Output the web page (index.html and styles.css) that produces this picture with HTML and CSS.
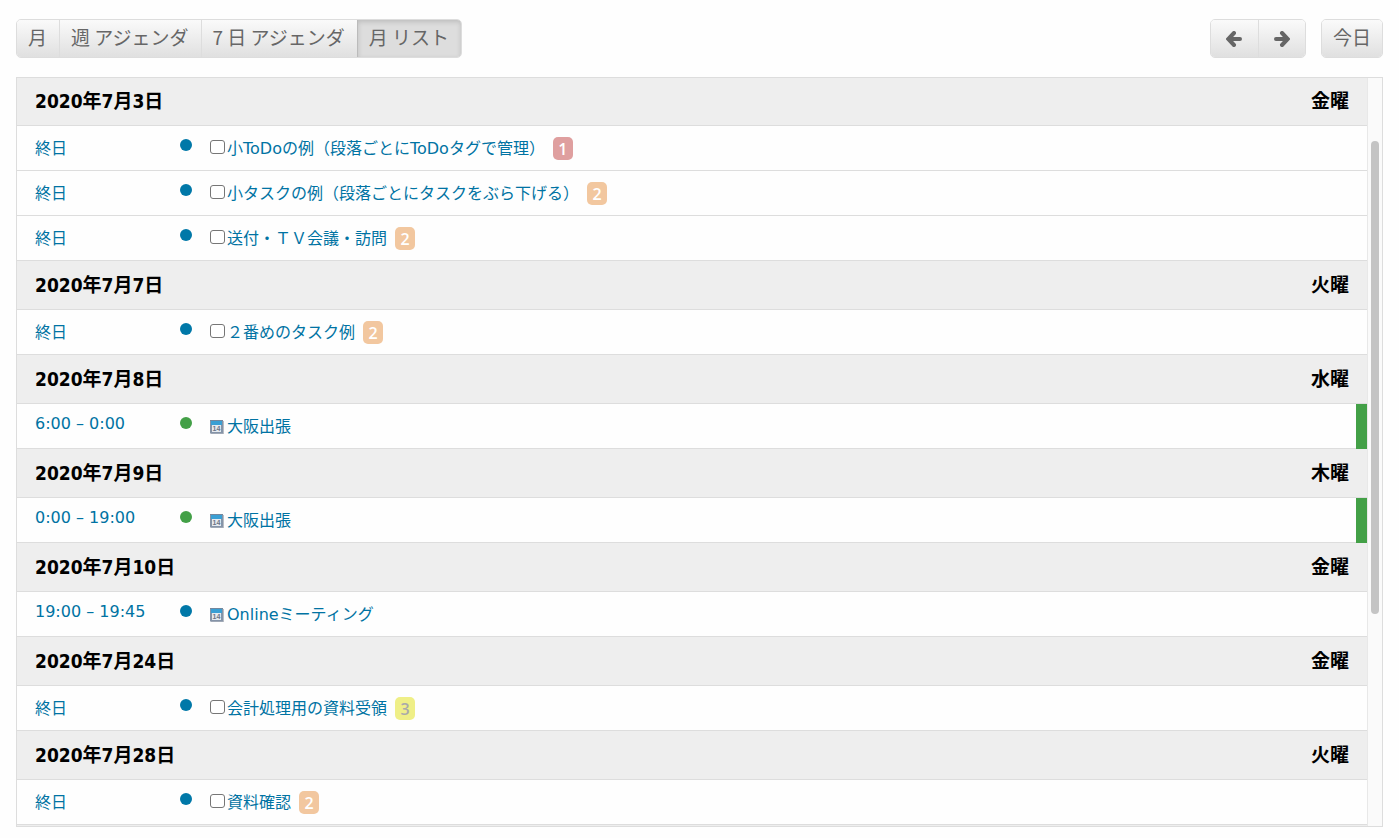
FILE: index.html
```html
<!DOCTYPE html>
<html lang="ja">
<head>
  <meta charset="UTF-8">
  <meta name="viewport" content="width=device-width, initial-scale=1">
  <title>カレンダー</title>
  <link rel="stylesheet" href="styles.css">
</head>
<body>
  <svg width="0" height="0" class="sprite" aria-hidden="true">
    <symbol id="icon-calendar" viewBox="0 0 14 14">
      <rect x="1" y="1" width="13" height="13" fill="#b9bdc4"/>
      <rect x="0" y="0" width="13" height="13.5" fill="#8594a8"/>
      <rect x="0" y="0" width="13" height="1" fill="#73879d"/>
      <rect x="1" y="1" width="11" height="4" fill="#3a9fd4"/>
      <rect x="2" y="5" width="9" height="7" fill="#e6eaf0"/>
      <text x="6.5" y="11" font-size="7" font-weight="bold" text-anchor="middle" fill="#6b7686">14</text>
    </symbol>
  </svg>

  <header class="toolbar">
    <div class="button-group views">
      <button type="button">月</button>
      <button type="button">週 アジェンダ</button>
      <button type="button">7 日 アジェンダ</button>
      <button type="button" class="active">月 リスト</button>
    </div>
    <div class="toolbar-right">
      <div class="button-group nav">
        <button type="button" aria-label="前へ">
          <svg width="16" height="16" viewBox="0 0 16 16"><path d="M8 2 L2.3 8 L8 14 M3 8 H14" /></svg>
        </button>
        <button type="button" aria-label="次へ">
          <svg width="16" height="16" viewBox="0 0 16 16"><path d="M8 2 L13.7 8 L8 14 M13 8 H2" /></svg>
        </button>
      </div>
      <div class="button-group">
        <button type="button">今日</button>
      </div>
    </div>
  </header>

  <main class="list-view">
    <div class="list-scroller">
      <table class="list-table">
        <tbody>
          <tr class="list-heading"><th colspan="4"><div><span>2020年7月3日</span><span>金曜</span></div></th></tr>
          <tr class="list-item">
            <td class="time">終日</td>
            <td class="marker"><span class="dot"></span></td>
            <td class="title"><div><input type="checkbox" aria-label="小ToDoの例"><a href="#">小ToDoの例（段落ごとにToDoタグで管理）</a><span class="badge p1">1</span></div></td>
            <td class="edge"></td>
          </tr>
          <tr class="list-item">
            <td class="time">終日</td>
            <td class="marker"><span class="dot"></span></td>
            <td class="title"><div><input type="checkbox" aria-label="小タスクの例"><a href="#">小タスクの例（段落ごとにタスクをぶら下げる）</a><span class="badge p2">2</span></div></td>
            <td class="edge"></td>
          </tr>
          <tr class="list-item">
            <td class="time">終日</td>
            <td class="marker"><span class="dot"></span></td>
            <td class="title"><div><input type="checkbox" aria-label="送付・ＴＶ会議・訪問"><a href="#">送付・ＴＶ会議・訪問</a><span class="badge p2">2</span></div></td>
            <td class="edge"></td>
          </tr>

          <tr class="list-heading"><th colspan="4"><div><span>2020年7月7日</span><span>火曜</span></div></th></tr>
          <tr class="list-item">
            <td class="time">終日</td>
            <td class="marker"><span class="dot"></span></td>
            <td class="title"><div><input type="checkbox" aria-label="２番めのタスク例"><a href="#">２番めのタスク例</a><span class="badge p2">2</span></div></td>
            <td class="edge"></td>
          </tr>

          <tr class="list-heading"><th colspan="4"><div><span>2020年7月8日</span><span>水曜</span></div></th></tr>
          <tr class="list-item trip">
            <td class="time timed">6:00 – 0:00</td>
            <td class="marker"><span class="dot"></span></td>
            <td class="title"><div><svg class="calendar" width="14" height="14" aria-hidden="true"><use href="#icon-calendar"/></svg><a href="#">大阪出張</a></div></td>
            <td class="edge"></td>
          </tr>

          <tr class="list-heading"><th colspan="4"><div><span>2020年7月9日</span><span>木曜</span></div></th></tr>
          <tr class="list-item trip">
            <td class="time timed">0:00 – 19:00</td>
            <td class="marker"><span class="dot"></span></td>
            <td class="title"><div><svg class="calendar" width="14" height="14" aria-hidden="true"><use href="#icon-calendar"/></svg><a href="#">大阪出張</a></div></td>
            <td class="edge"></td>
          </tr>

          <tr class="list-heading"><th colspan="4"><div><span>2020年7月10日</span><span>金曜</span></div></th></tr>
          <tr class="list-item">
            <td class="time timed">19:00 – 19:45</td>
            <td class="marker"><span class="dot"></span></td>
            <td class="title"><div><svg class="calendar" width="14" height="14" aria-hidden="true"><use href="#icon-calendar"/></svg><a href="#">Onlineミーティング</a></div></td>
            <td class="edge"></td>
          </tr>

          <tr class="list-heading"><th colspan="4"><div><span>2020年7月24日</span><span>金曜</span></div></th></tr>
          <tr class="list-item">
            <td class="time">終日</td>
            <td class="marker"><span class="dot"></span></td>
            <td class="title"><div><input type="checkbox" aria-label="会計処理用の資料受領"><a href="#">会計処理用の資料受領</a><span class="badge p3">3</span></div></td>
            <td class="edge"></td>
          </tr>

          <tr class="list-heading"><th colspan="4"><div><span>2020年7月28日</span><span>火曜</span></div></th></tr>
          <tr class="list-item">
            <td class="time">終日</td>
            <td class="marker"><span class="dot"></span></td>
            <td class="title"><div><input type="checkbox" aria-label="資料確認"><a href="#">資料確認</a><span class="badge p2">2</span></div></td>
            <td class="edge"></td>
          </tr>
        </tbody>
      </table>
    </div>
    <div class="scrollbar"><div class="thumb"></div></div>
  </main>
</body>
</html>
```
FILE: styles.css
```css
* {
  box-sizing: border-box;
}

body {
  margin: 0;
  height: 100vh;
  padding: 19px 16px 11px;
  display: flex;
  flex-direction: column;
  gap: 19px;
  background: #fefefe;
  color: #000;
  font-family: "DejaVu Sans", "Noto Sans CJK JP", sans-serif;
  font-size: 16px;
}

.sprite {
  display: none;
}

/* Toolbar */
.toolbar {
  display: flex;
  justify-content: space-between;
}

.toolbar-right {
  display: flex;
  gap: 15px;
}

.button-group {
  display: flex;
  height: 39px;
  border: 1px solid #ddd;
  border-radius: 5px;
  overflow: hidden;
}

.button-group button {
  border: none;
  border-left: 1px solid #ddd;
  margin: 0;
  padding: 0 11px 4px;
  background: linear-gradient(#fafafa, #e0e0e0);
  color: #666;
  font-family: "Noto Sans CJK JP", sans-serif;
  font-size: 19px;
  line-height: 33px;
  white-space: nowrap;
  cursor: pointer;
}

.views button {
  padding-right: 12px;
}

.button-group button:first-child {
  border-left: none;
}

.button-group button.active {
  border-left-color: #bbb;
  background: #ddd;
  box-shadow: inset 0 2px 5px rgba(0, 0, 0, 0.15);
}

.nav button {
  display: flex;
  align-items: center;
  justify-content: center;
  width: 47px;
  padding: 0;
}

.nav path {
  fill: none;
  stroke: #666;
  stroke-width: 4;
  stroke-linecap: round;
  stroke-linejoin: miter;
}

/* List */
.list-view {
  flex: 1;
  min-height: 0;
  display: flex;
  border: 1px solid #ddd;
}

.list-scroller {
  flex: 1;
  overflow: hidden;
  background: #eee;
}

.list-table {
  width: 100%;
  border-spacing: 0;
}

.list-heading th {
  padding: 10px 18px;
  background: #eee;
  border-bottom: 1px solid #ddd;
  font-family: "DejaVu Sans Condensed", "Noto Sans CJK JP", sans-serif;
  font-size: 19px;
  line-height: 28px;
}

.list-heading:first-child th {
  padding-top: 9px;
}

.list-heading div {
  display: flex;
  justify-content: space-between;
}

.list-item {
  color: #0073a3;
}

.list-item td {
  height: 45px;
  padding: 0;
  background: #fefefe;
  border-bottom: 1px solid #ddd;
  vertical-align: top;
}

.list-item .time {
  width: 163px;
  padding: 10px 0 0 18px;
  line-height: 26px;
  white-space: nowrap;
}

.list-item .timed {
  line-height: 20px;
}

.list-item .marker {
  width: 30px;
  padding-top: 13px;
}

.dot {
  display: block;
  width: 12px;
  height: 12px;
  border-radius: 50%;
  background: #0078a8;
}

.list-item .edge {
  width: 11px;
}

.trip .dot,
.list-item.trip .edge {
  background: #43a047;
}

.list-item.trip .edge {
  border-bottom-color: #43a047;
}

.title div {
  display: flex;
  align-items: center;
  height: 44px;
}

.title a {
  padding-top: 2px;
  color: inherit;
  text-decoration: none;
  line-height: 24px;
}

.title input {
  appearance: none;
  width: 15px;
  height: 14px;
  margin: 0 2px 2px 0;
  border: 1px solid #767676;
  border-radius: 3px;
  background: #fff;
}

.calendar {
  margin: 2px 3px 0 0;
}

.calendar,
.sprite {
  font-family: "Liberation Sans", sans-serif;
}

.badge {
  width: 20px;
  height: 23px;
  margin-left: 8px;
  border-radius: 5px;
  color: #fff;
  font-family: "Open Sans", sans-serif;
  font-weight: 600;
  line-height: 24px;
  text-align: center;
}

.badge.p1 {
  background: #df9f9f;
}

.badge.p2 {
  background: #f2c79f;
}

.badge.p3 {
  background: #efef87;
  color: #aaa;
}

/* Scrollbar */
.scrollbar {
  width: 15px;
  padding: 63px 3px 0;
  background: #fafafa;
  border-left: 1px solid #e8e8e8;
}

.thumb {
  width: 8px;
  height: 69%;
  border-radius: 4px;
  background: #c4c4c4;
}
```
